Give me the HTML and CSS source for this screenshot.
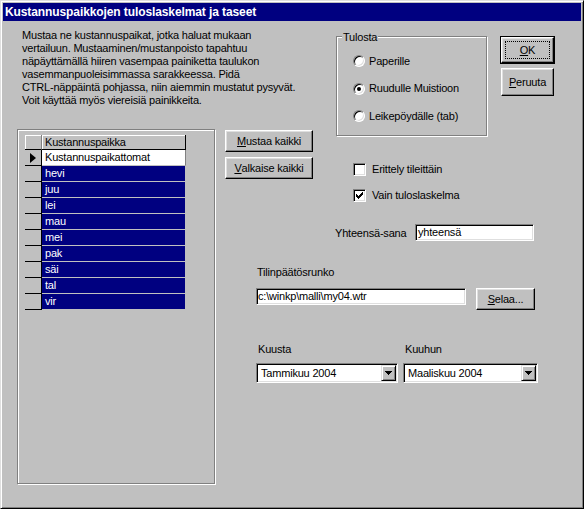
FILE: index.html
```html
<!DOCTYPE html>
<html lang="fi">
<head>
<meta charset="utf-8">
<title>Kustannuspaikkojen tuloslaskelmat ja taseet</title>
<link rel="stylesheet" href="styles.css">
</head>
<body>
<div class="window">
  <div class="titlebar">Kustannuspaikkojen tuloslaskelmat ja taseet</div>
  <div class="client">
    <div class="left">
      <p class="intro">Mustaa ne kustannuspaikat, jotka haluat mukaan<br>vertailuun. Mustaaminen/mustanpoisto tapahtuu<br>näpäyttämällä hiiren vasempaa painiketta taulukon<br>vasemmanpuoleisimmassa sarakkeessa. Pidä<br>CTRL-näppäintä pohjassa, niin aiemmin mustatut pysyvät.<br>Voit käyttää myös viereisiä painikkeita.</p>
      <div class="frame">
        <div class="grid">
          <div class="rh corner"></div><div class="hd">Kustannuspaikka</div>
          <div class="rh"><span class="arrow"></span></div><div class="cell">Kustannuspaikattomat</div>
          <div class="rh"></div><div class="cell sel">hevi</div>
          <div class="rh"></div><div class="cell sel">juu</div>
          <div class="rh"></div><div class="cell sel">lei</div>
          <div class="rh"></div><div class="cell sel">mau</div>
          <div class="rh"></div><div class="cell sel">mei</div>
          <div class="rh"></div><div class="cell sel">pak</div>
          <div class="rh"></div><div class="cell sel">säi</div>
          <div class="rh"></div><div class="cell sel">tal</div>
          <div class="rh"></div><div class="cell sel">vir</div>
        </div>
      </div>
    </div>
    <div class="right">
      <div class="top">
        <div class="col-a">
          <button class="btn wide"><u>M</u>ustaa kaikki</button>
          <button class="btn wide"><u>V</u>alkaise kaikki</button>
        </div>
        <div class="col-b">
          <div class="group">
            <span class="legend">Tulosta</span>
            <div class="radios">
              <label class="opt"><span class="radio"></span>Paperille</label>
              <label class="opt"><span class="radio on"></span>Ruudulle Muistioon</label>
              <label class="opt"><span class="radio"></span>Leikepöydälle (tab)</label>
            </div>
          </div>
          <div class="checks">
            <label class="opt"><span class="check"></span>Erittely tileittäin</label>
            <label class="opt"><span class="check"><svg class="tick" width="7" height="7" viewBox="0 0 7 7"><path d="M6 0h1v1H6z M5 1h2v1H5z M0 2h1v1H0z M4 2h3v1H4z M0 3h2v1H0z M3 3h3v1H3z M0 4h5v1H0z M1 5h3v1H1z M2 6h1v1H2z" fill="#000"/></svg></span>Vain tuloslaskelma</label>
          </div>
        </div>
        <div class="col-c">
          <div class="default"><button class="btn ok"><u>O</u>K</button></div>
          <button class="btn cancel"><u>P</u>eruuta</button>
        </div>
      </div>
      <div class="sumrow">
        <span class="sumlabel">Yhteensä-sana</span>
        <div class="field sum">yhteensä</div>
      </div>
      <div class="lower">
        <div class="label tp">Tilinpäätösrunko</div>
        <div class="pathrow">
          <div class="field path">c:\winkp\malli\my04.wtr</div>
          <button class="btn selaa"><u>S</u>elaa...</button>
        </div>
        <div class="months">
          <div class="month m1">
            <div class="label mlabel">Kuusta</div>
            <div class="combo"><span class="val">Tammikuu 2004</span><span class="drop"><svg width="7" height="4" viewBox="0 0 7 4"><path d="M0 0h7v1H0z M1 1h5v1H1z M2 2h3v1H2z M3 3h1v1H3z" fill="#000"/></svg></span></div>
          </div>
          <div class="month m2">
            <div class="label mlabel">Kuuhun</div>
            <div class="combo"><span class="val">Maaliskuu 2004</span><span class="drop"><svg width="7" height="4" viewBox="0 0 7 4"><path d="M0 0h7v1H0z M1 1h5v1H1z M2 2h3v1H2z M3 3h1v1H3z" fill="#000"/></svg></span></div>
          </div>
        </div>
      </div>
    </div>
  </div>
</div>
</body>
</html>
```
FILE: styles.css
```css
* { box-sizing: border-box; }
html, body { margin: 0; padding: 0; background: #c0c0c0; }
body {
  font-family: "Liberation Sans", Arial, sans-serif;
  font-size: 11px;
  line-height: 13px;
  letter-spacing: -0.2px;
  color: #000;
}
u { text-decoration: underline; text-underline-offset: 1px; }

.window {
  width: 584px;
  height: 509px;
  background: #c0c0c0;
  border: 1px solid;
  border-color: #dfdfdf #000 #000 #dfdfdf;
  box-shadow: inset 1px 1px #fff, inset -1px -1px #808080;
  padding: 2px;
  display: flex;
  flex-direction: column;
}
.titlebar {
  height: 18px;
  background: #000080;
  color: #fff;
  font-weight: bold;
  font-size: 12px;
  line-height: 18px;
  letter-spacing: -0.1px;
  padding-left: 2px;
  white-space: nowrap;
}
.client { display: flex; flex: 1; }

/* left column */
.left { width: 198px; margin-left: 14px; flex: none; }
.intro { margin: 8px 0 0 5px; white-space: nowrap; }
.frame {
  margin-top: 22px;
  height: 355px;
  border: 1px solid #808080;
  box-shadow: inset 1px 1px #fff, 1px 1px #fff;
  padding: 5px 0 0 7px;
}
.grid { display: grid; grid-template-columns: 17px 144px; }
.rh {
  height: 16px;
  background: #c0c0c0;
  border-bottom: 1px solid #000;
  border-right: 1px solid #000;
  display: flex;
  align-items: center;
  justify-content: center;
}
.rh.corner { height: 15px; box-shadow: inset 1px 1px #fff; border-right-color: #808080; }
.arrow {
  width: 0; height: 0;
  border-left: 6px solid #000;
  border-top: 5px solid transparent;
  border-bottom: 5px solid transparent;
}
.hd {
  height: 15px;
  border-bottom: 1px solid #000;
  border-right: 1px solid #000;
  box-shadow: inset 1px 1px #fff;
  padding: 1px 0 0 3px;
  white-space: nowrap;
}
.cell {
  height: 16px;
  background: #fff;
  border-bottom: 1px solid #c0c0c0;
  border-right: 1px solid #808080;
  padding: 1px 0 0 3px;
  white-space: nowrap;
}
.cell.sel { background: #000080; color: #fff; border-right-color: #c0c0c0; }

/* right column */
.right { margin-left: 10px; flex: 1; }
.top { display: flex; align-items: flex-start; }

.btn {
  font: inherit;
  letter-spacing: inherit;
  color: #000;
  background: #c0c0c0;
  border: 1px solid;
  border-color: #fff #000 #000 #fff;
  box-shadow: inset -1px -1px #808080, inset 1px 1px #dfdfdf;
  padding: 0;
  margin: 0;
  display: flex;
  align-items: center;
  justify-content: center;
  white-space: nowrap;
}
.col-a { width: 88px; margin-top: 109px; display: flex; flex-direction: column; gap: 5px; flex: none; }
.btn.wide { width: 88px; height: 22px; }

.col-b { width: 152px; margin-left: 23px; flex: none; }
.group {
  margin-top: 15px;
  width: 151px;
  height: 100px;
  border: 1px solid #808080;
  box-shadow: inset 1px 1px #fff, 1px 1px #fff;
  padding-left: 16px;
}
.legend {
  display: block;
  width: max-content;
  margin: -6px 0 0 -11px;
  padding: 0 1px 0 1px;
  background: #c0c0c0;
}
.radios { display: flex; flex-direction: column; gap: 13.5px; margin-top: 10px; }
.opt { display: flex; align-items: center; height: 14px; white-space: nowrap; }
.radio {
  width: 12px; height: 12px;
  border-radius: 50%;
  background: #fff;
  border: 1px solid;
  border-color: #808080 #fff #fff #808080;
  box-shadow: inset 1px 1px #000, inset -1px -1px #dfdfdf;
  margin-right: 4px;
  display: flex;
  align-items: center;
  justify-content: center;
  flex: none;
}
.radio.on::after { content: ""; width: 4px; height: 4px; border-radius: 50%; background: #000; }

.checks { margin-top: 27px; padding-left: 17px; display: flex; flex-direction: column; gap: 13px; }
.checks .opt { height: 13px; }
.check {
  width: 13px; height: 13px;
  background: #fff;
  border: 1px solid;
  border-color: #808080 #fff #fff #808080;
  box-shadow: inset 1px 1px #000, inset -1px -1px #dfdfdf;
  margin-right: 6px;
  flex: none;
}
.tick { display: block; margin: 2px 0 0 2px; }

.col-c { margin-left: 12px; margin-top: 15px; flex: none; }
.default { border: 1px solid #000; width: 55px; }
.btn.ok { width: 53px; height: 26px; position: relative; }
.btn.ok::after {
  content: "";
  position: absolute;
  left: 3px; top: 3px; right: 3px; bottom: 3px;
  border: 1px dotted #000;
}
.btn.cancel { width: 53px; height: 28px; margin: 4px 0 0 1px; }

.field {
  background: #fff;
  border: 1px solid;
  border-color: #808080 #fff #fff #808080;
  box-shadow: inset 1px 1px #000, inset -1px -1px #dfdfdf;
  height: 17px;
  padding: 1px 0 0 2px;
  white-space: nowrap;
  overflow: hidden;
}
.sumrow { display: flex; align-items: flex-start; margin: 22px 0 0 110px; }
.sumlabel { width: 80px; padding-top: 3px; white-space: nowrap; }
.field.sum { width: 119px; }

.lower { margin-left: 31px; }
.label { white-space: nowrap; }
.tp { margin-top: 25px; padding-left: 1px; }
.pathrow { display: flex; align-items: flex-start; gap: 10px; margin-top: 9px; }
.field.path { width: 210px; padding-left: 1px; }
.btn.selaa { width: 59px; height: 22px; }

.months { display: flex; gap: 5px; margin-top: 33px; }
.m1 { width: 142px; }
.m2 { width: 135px; }
.mlabel { padding-left: 2px; margin-bottom: 7px; }
.combo {
  height: 20px;
  background: #fff;
  border: 1px solid;
  border-color: #808080 #fff #fff #808080;
  box-shadow: inset 1px 1px #000, inset -1px -1px #dfdfdf;
  padding: 1px;
  display: flex;
  align-items: center;
}
.val { flex: 1; padding-left: 3px; white-space: nowrap; }
.drop {
  width: 15px;
  height: 16px;
  background: #c0c0c0;
  border: 1px solid;
  border-color: #dfdfdf #000 #000 #dfdfdf;
  box-shadow: inset 1px 1px #fff, inset -1px -1px #808080;
  display: flex;
  align-items: center;
  justify-content: center;
  flex: none;
}
.drop svg { display: block; }
```
